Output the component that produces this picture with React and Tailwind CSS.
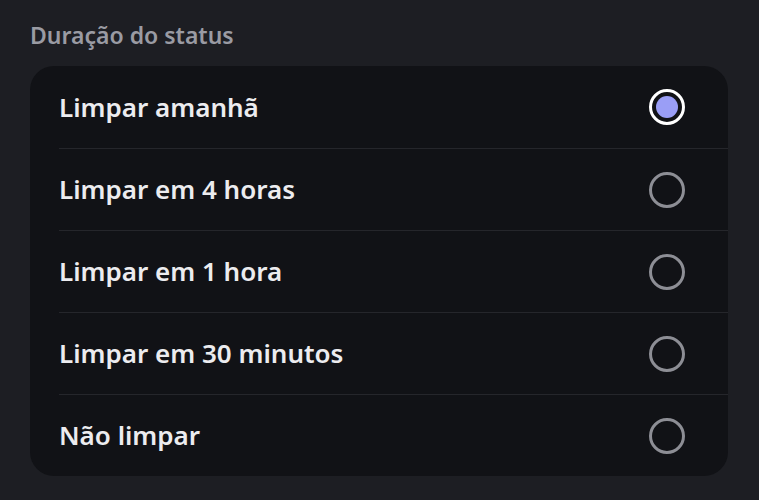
const options = [
  { label: 'Limpar amanhã', selected: true },
  { label: 'Limpar em 4 horas' },
  { label: 'Limpar em 1 hora' },
  { label: 'Limpar em 30 minutos' },
  { label: 'Não limpar' },
]

function Radio({ selected }) {
  if (selected) {
    return (
      <span className="flex h-[36px] w-[36px] items-center justify-center rounded-full border-[3px] border-white">
        <span className="h-[22px] w-[22px] rounded-full bg-[#9a9ef6]" />
      </span>
    )
  }
  return <span className="h-[36px] w-[36px] rounded-full border-[3px] border-[#8d8e95]" />
}

export default function App() {
  return (
    <div
      className="h-[500px] w-[759px] bg-[#1d1e23] px-[30px] pt-[20px]"
      style={{ fontFamily: '"Noto Sans", "Open Sans", sans-serif' }}
    >
      <h2 className="m-0 text-[23px] font-semibold leading-[30px] text-[#9a9ba3]">Duração do status</h2>
      <div className="mt-[16px] w-[698px] overflow-hidden rounded-[24px] bg-[#111216]">
        {options.map((opt, i) => (
          <div key={opt.label} className="pl-[29px]">
            <div
              className={
                'flex h-[82px] items-center justify-between pr-[43px] ' +
                (i > 0 ? 'border-t border-[#25262b]' : '')
              }
            >
              <span className="text-[26px] font-semibold text-[#ececef]">{opt.label}</span>
              <Radio selected={opt.selected} />
            </div>
          </div>
        ))}
      </div>
    </div>
  )
}
